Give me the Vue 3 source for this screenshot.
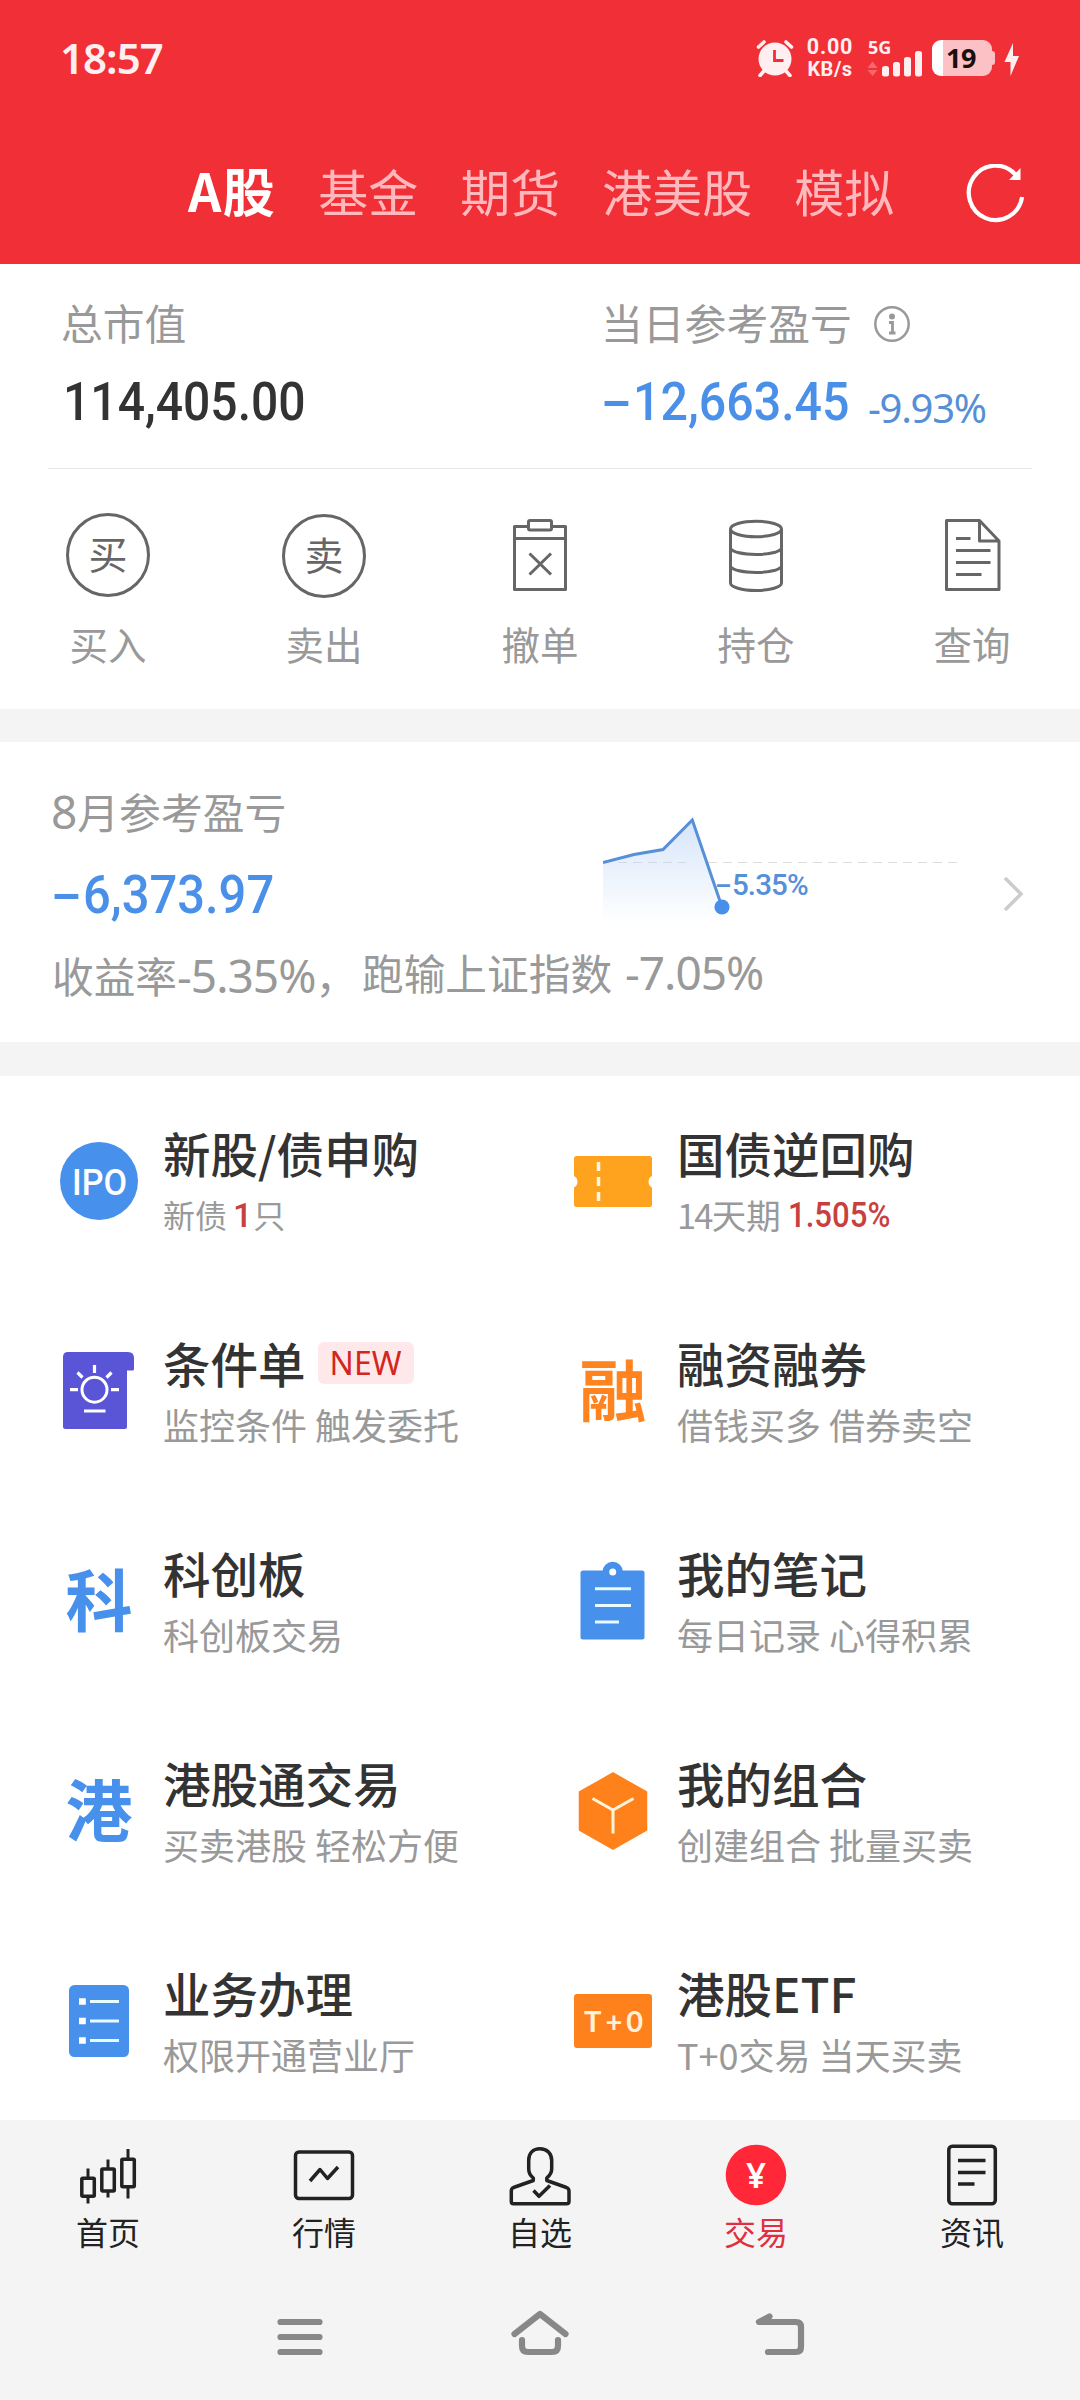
<script setup>
const tabs = ['A股', '基金', '期货', '港美股', '模拟']

const actions = [
  { key: 'buy', label: '买入', mark: '买' },
  { key: 'sell', label: '卖出', mark: '卖' },
  { key: 'cancel', label: '撤单' },
  { key: 'hold', label: '持仓' },
  { key: 'query', label: '查询' },
]

const services = [
  { key: 'ipo', title: '新股/债申购' },
  { key: 'bond', title: '国债逆回购' },
  { key: 'cond', title: '条件单', badge: 'NEW', sub: '监控条件 触发委托' },
  { key: 'char', mark: '融', tone: 'orange', title: '融资融券', sub: '借钱买多 借券卖空' },
  { key: 'char', mark: '科', tone: 'blue', title: '科创板', sub: '科创板交易' },
  { key: 'note', title: '我的笔记', sub: '每日记录 心得积累' },
  { key: 'char', mark: '港', tone: 'blue', title: '港股通交易', sub: '买卖港股 轻松方便' },
  { key: 'combo', title: '我的组合', sub: '创建组合 批量买卖' },
  { key: 'list', title: '业务办理', sub: '权限开通营业厅' },
  { key: 't0', title: '港股ETF', sub: 'T+0交易 当天买卖' },
]

const navs = [
  { key: 'home', label: '首页' },
  { key: 'market', label: '行情' },
  { key: 'self', label: '自选' },
  { key: 'trade', label: '交易', active: true },
  { key: 'news', label: '资讯' },
]
</script>

<template>
  <div class="screen">
    <header class="top">
      <div class="status">
        <span class="clock">18:57</span>
        <div class="status-right">
          <svg class="alarm" viewBox="0 0 38 38" width="38" height="38">
            <circle cx="19" cy="20" r="16.5" fill="#ffeff0" />
            <path d="M2.5 8 8 3M35.5 8 30 3M8 32l-4 4.5M30 32l4 4.5" stroke="#ffeff0" stroke-width="3.6" stroke-linecap="round" />
            <path d="M18.5 11v10.500h9" fill="none" stroke="#f12f37" stroke-width="2.800" />
          </svg>
          <div class="speed"><span>0.00</span><span>KB/s</span></div>
          <div class="signal">
            <span class="g5">5G</span>
            <svg viewBox="0 0 56 38" width="56" height="38">
              <path d="M.5 29 5.500 22.500 10.500 29zM.5 31h10L5.500 37z" fill="#f8676c" />
              <g fill="#ffeff0">
                <rect x="15" y="27" width="7" height="10.500" rx="2.500" />
                <rect x="26" y="23" width="7" height="14.500" rx="2.500" />
                <rect x="37" y="18" width="7" height="19.500" rx="2.500" />
                <rect x="48" y="12" width="7" height="25.500" rx="2.500" />
              </g>
            </svg>
          </div>
          <div class="battery"><span>19</span></div>
          <svg class="bolt" viewBox="0 0 16 34" width="16" height="34">
            <path d="M9 0 .5 19H6.500V33L15 13H9z" fill="#ffeff0" />
          </svg>
        </div>
      </div>
      <nav class="tabs">
        <span v-for="(t, i) in tabs" :key="t" class="tab" :class="{ on: i === 0 }">{{ t }}</span>
        <svg class="refresh" viewBox="0 4 60 60" width="60" height="60">
          <path d="M49.500 14.600A26.800 27.200 0 1 0 56.100 37" fill="none" stroke="#fff" stroke-width="4.200" />
          <path d="M54.500 8v12H43z" fill="#fff" />
        </svg>
      </nav>
    </header>

    <section class="card assets">
      <div class="summary">
        <div class="cell">
          <div class="cap">总市值</div>
          <div class="amount dark"><span class="num">114,405.00</span></div>
        </div>
        <div class="cell">
          <div class="cap">当日参考盈亏
            <svg viewBox="0 0 38 38" width="38" height="38">
              <circle cx="19" cy="19" r="16.700" fill="none" stroke="#999" stroke-width="2.500" />
              <circle cx="19" cy="11.500" r="3" fill="#999" />
              <path d="M16 17.500h3.500V28M16 28h6.500" fill="none" stroke="#999" stroke-width="2.800" />
            </svg>
          </div>
          <div class="amount blue">
            <span class="minus">-</span><span class="num day">12,663.45</span><span class="pct">-9.93%</span>
          </div>
        </div>
      </div>
      <div class="actions">
        <div v-for="a in actions" :key="a.key" class="action">
          <span v-if="a.mark" class="ring" :class="a.key">{{ a.mark }}</span>
          <svg v-else viewBox="0 0 90 90" width="90" height="90" fill="none" stroke="#666" stroke-width="3" stroke-linejoin="round">
            <template v-if="a.key === 'cancel'">
              <path d="M33.500 16.500h-14v63h51v-63h-14" />
              <rect x="33.500" y="10.500" width="23" height="9.500" rx="1.500" />
              <path d="M19.500 28.500h51M34.500 43.500l21.500 21M56 43.500l-21.500 21" />
            </template>
            <template v-else-if="a.key === 'hold'">
              <ellipse cx="45" cy="19" rx="25.500" ry="7.800" />
              <path d="M19.500 19v54c0 4 11 7.500 25.500 7.500S70.500 77 70.500 73V19M19.500 38.500C22 42 32 44.500 45 44.500s23-2.500 25.500-6M19.500 56.500C22 60 32 62.500 45 62.500s23-2.500 25.500-6" />
            </template>
            <template v-else>
              <path d="M52.500 10.500h-33v69h52.500v-48.500zM52.500 10.500v20.500h19.500M29 28.500h14.500M29 40.500h34.500M29 52.500h34.500M29 64.500h25.500" />
            </template>
          </svg>
          <span class="action-label">{{ a.label }}</span>
        </div>
      </div>
    </section>

    <section class="card month">
      <div class="month-main">
        <div class="month-text">
          <div class="cap"><span class="lat">8</span>月参考盈亏</div>
          <div class="amount blue"><span class="minus">-</span><span class="num mon">6,373.97</span></div>
        </div>
        <div class="chart">
          <svg viewBox="603 810 360 120" width="360" height="120">
            <defs>
              <linearGradient id="area" x1="0" y1="0" x2="0" y2="1">
                <stop offset="0" stop-color="#d6e5fa" />
                <stop offset="1" stop-color="#ffffff" />
              </linearGradient>
            </defs>
            <path d="M603 862.500H958" stroke="#dcdcdc" stroke-width="1.200" stroke-dasharray="9 6" />
            <path d="M603 862.500 634 854.500 663 849.500 692 820 722 907V922H603z" fill="url(#area)" />
            <path d="M618 862.500H686" stroke="#d2d9e4" stroke-width="1.200" stroke-dasharray="9 6" />
            <path d="M603 862.500 634 854.500 663 849.500 692.300 820 722 907" fill="none" stroke="#5590d9" stroke-width="3" />
            <circle cx="722" cy="907" r="7.600" fill="#478feb" />
          </svg>
          <span class="chart-tag"><span class="dash">-</span>5.35%</span>
        </div>
        <svg class="chev" viewBox="0 0 24 40" width="24" height="40">
          <path d="M3 4 19 20 3 36" fill="none" stroke="#ccc" stroke-width="3.600" />
        </svg>
      </div>
      <div class="month-note">
        <span class="n1">收益率<span class="lat a">-5.35%</span>，</span><span class="n2">跑输上证指数</span><span class="lat b">-7.05%</span>
      </div>
    </section>

    <section class="card services">
      <div v-for="s in services" :key="s.title" class="service">
        <span v-if="s.key === 'char'" class="glyph" :class="s.tone">{{ s.mark }}</span>
        <svg v-else class="pic" viewBox="0 0 84 84" width="84" height="84">
          <template v-if="s.key === 'ipo'">
            <circle cx="42" cy="42" r="39" fill="#4790ec" />
            <text x="42.500" y="55.500" class="ipo" text-anchor="middle" textLength="55" lengthAdjust="spacingAndGlyphs">IPO</text>
          </template>
          <template v-else-if="s.key === 'bond'">
            <path d="M5.500 17h73a2.500 2.500 0 0 1 2.500 2.500V37a6.500 6.500 0 0 0 0 11.500v17a2.500 2.500 0 0 1-2.500 2.500h-73A2.500 2.500 0 0 1 3 65.500v-17A6.500 6.500 0 0 0 3 37V19.500A2.500 2.500 0 0 1 5.500 17z" fill="#ffa21d" />
            <path d="M27.500 23v9M27.500 38v9M27.500 53v9" stroke="#fff6e3" stroke-width="3.500" />
          </template>
          <template v-else-if="s.key === 'cond'">
            <path d="M11 3h60q6 0 6 6v11q0 1.500-1.500 1.500H70V77.500q0 2.500-2.500 2.500H8.500Q6 80 6 77.500V8q0-5 5-5z" fill="#5955d6" />
            <circle cx="37.500" cy="40.700" r="12.500" fill="none" stroke="#fff" stroke-width="3" />
            <path d="M37.500 16v8M13 40.700h8M54 40.700h8M20.500 23.500l5 5M54.500 23.500l-5 5M27 62h21.500" stroke="#fff" stroke-width="3.200" />
          </template>
          <template v-else-if="s.key === 'note'">
            <path d="M12.500 12H32.300a10.300 10.300 0 0 1 19.400 0H71.500a2.500 2.500 0 0 1 2.500 2.500V78.500a2.500 2.500 0 0 1-2.500 2.500h-59A2.500 2.500 0 0 1 10 78.500v-64A2.500 2.500 0 0 1 12.500 12z" transform="translate(-.5 -.5)" fill="#4790ec" />
            <path d="M31.500 13a10.200 10.200 0 0 1 20.400 0z" fill="#4790ec" />
            <circle cx="41.700" cy="13" r="3.500" fill="#fff" />
            <path d="M24 29.700h36M24 46.500h36M24 63h24" stroke="#e8fbff" stroke-width="3" />
          </template>
          <template v-else-if="s.key === 'combo'">
            <path d="M42 4 75.500 23v38L42 80 8.500 61V23z" fill="#ff811c" stroke="#ff811c" stroke-width="1.500" stroke-linejoin="round" />
            <path d="M21.500 29.500 42 41 62.500 29.500M42 41v23.500" fill="none" stroke="#fff3da" stroke-width="3" />
          </template>
          <template v-else-if="s.key === 'list'">
            <rect x="12" y="6" width="60" height="72" rx="5.500" fill="#4790ec" />
            <path d="M22 22.500h6.800M22 42h6.800M22 61.500h6.800" stroke="#fff" stroke-width="6.500" />
            <path d="M33 22.500h29M33 42h29M33 61.500h29" stroke="#e8fbff" stroke-width="3" />
          </template>
          <template v-else>
            <rect x="3" y="15" width="78" height="54" rx="3" fill="#ff811c" />
            <text x="42.500" y="52.500" class="tzero" text-anchor="middle" textLength="59">T+0</text>
          </template>
        </svg>
        <div class="info">
          <div class="title">{{ s.title }}<span v-if="s.badge" class="badge">{{ s.badge }}</span></div>
          <div v-if="s.key === 'ipo'" class="sub small">新债<b class="one">1</b>只</div>
          <div v-else-if="s.key === 'bond'" class="sub mid"><span class="days">14</span>天期<b class="rate">1.505%</b></div>
          <div v-else class="sub">{{ s.sub }}</div>
        </div>
      </div>
    </section>

    <footer class="bottom">
      <div class="navs">
        <div v-for="n in navs" :key="n.key" class="nav" :class="{ active: n.active }">
          <svg viewBox="0 0 70 70" width="70" height="70" fill="none" stroke="#222" stroke-width="3.500" stroke-linejoin="round">
            <template v-if="n.key === 'home'">
              <rect x="8.800" y="38.300" width="12.500" height="18" rx="1" />
              <rect x="28.800" y="29" width="12.500" height="22" rx="1" />
              <rect x="48.800" y="19.300" width="12.500" height="27.500" rx="1" />
              <path d="M15 28.500v9M15 57v6.500M35 19.500v9M35 52v5.500M55 9v10M55 47.500V58.500" stroke-width="3" />
            </template>
            <template v-else-if="n.key === 'market'">
              <rect x="6.500" y="12" width="57" height="46.500" rx="3.500" />
              <path d="M21 41 31 29.500 38.500 38.500 49 27" />
            </template>
            <template v-else-if="n.key === 'self'">
              <path d="M28.300 38C24.500 35 23.700 32 23.700 29V20.500C23.700 13.500 28 8.800 35 8.800S46.700 13.500 46.700 20.500V29C46.700 32 46 34.500 41.800 38v2.500L61.500 47.500Q64 48.500 64 51V61.500Q64 63.800 61.500 63.800H8.500Q6.300 63.800 6.300 61.500V51Q6.300 48.500 8.500 47.500L28.300 40.500z" />
              <path d="M28.500 50.500 34 56.300 45 45.500" />
            </template>
            <template v-else-if="n.key === 'trade'">
              <circle cx="35" cy="35" r="30.300" fill="#ff2738" stroke="none" />
              <text x="35" y="48" class="yen" text-anchor="middle">¥</text>
            </template>
            <template v-else>
              <rect x="11.800" y="6.200" width="46.500" height="57.500" rx="3.500" />
              <path d="M21 20.500h27.500M21 32.500h27.500M21 44h16.500" />
            </template>
          </svg>
          <span>{{ n.label }}</span>
        </div>
      </div>
      <div class="sys">
        <svg viewBox="270 2300 540 70" width="540" height="70" fill="none" stroke="#888" stroke-width="6.200" stroke-linecap="round" stroke-linejoin="round">
          <path d="M280.500 2322h39M280.500 2337h39M280.500 2352h39" />
          <path d="M514.500 2334 540 2314 565.500 2334M522 2340v6q0 6 6 6h24q6 0 6-6v-6" />
          <path d="M769.500 2316.500 759 2322H796q5 0 5 5v20q0 5-5 5H768" />
        </svg>
      </div>
    </footer>
  </div>
</template>

<style>
body {
  background: #fff;
}
</style>

<style scoped>
.screen {
  width: 1080px;
  height: 2400px;
  overflow: hidden;
  background: #f4f4f4;
  display: flex;
  flex-direction: column;
  font-family: 'Noto Sans CJK SC', sans-serif;
  white-space: nowrap;
}
svg {
  display: block;
  flex: none;
}
.top {
  height: 264px;
  background: #f12f37;
  color: #fff;
}
.status {
  height: 116px;
  display: flex;
  justify-content: space-between;
  padding: 0 60px 0 60px;
}
.clock {
  font: 600 42px/115px 'Noto Sans', sans-serif;
  color: #ffeff0;
  letter-spacing: -1px;
}
.status-right {
  display: flex;
  align-items: center;
}
.speed {
  width: 50px;
  margin-left: 11px;
  display: flex;
  flex-direction: column;
  align-items: center;
  font: 700 20px/22px Roboto, sans-serif;
  color: #ffeff0;
}
.speed span:first-child {
  font-size: 21.500px;
  letter-spacing: 0.800px;
}
.speed span:last-child {
  letter-spacing: 0.500px;
}
.signal {
  position: relative;
  margin-left: 12px;
}
.g5 {
  position: absolute;
  left: 1px;
  top: -4px;
  font: 700 18px/24px 'Noto Sans', sans-serif;
  color: #ffeff0;
}
.battery {
  position: relative;
  width: 60px;
  height: 36px;
  margin-left: 9px;
  border-radius: 9px;
  background: linear-gradient(90deg, #fff 11px, #fbc1c4 11px);
  font: 700 27px/36px 'Noto Sans', sans-serif;
  color: #1a0e0f;
}
.battery span {
  display: block;
  padding-left: 14px;
  letter-spacing: -0.500px;
}
.battery::after {
  content: '';
  position: absolute;
  left: 60px;
  top: 11px;
  width: 3px;
  height: 14px;
  border-radius: 0 3px 3px 0;
  background: #fbc1c4;
}
.bolt {
  margin: 4px 0 0 12px;
}
.tabs {
  height: 148px;
  display: flex;
  align-items: center;
  gap: 42px;
  padding: 4px 54px 0 188px;
}
.tab {
  font-size: 50px;
  line-height: 72px;
  margin-top: -8px;
  color: #ffb9bd;
}
.tab.on {
  font-size: 52px;
  font-weight: 700;
  color: #fff;
  letter-spacing: 1.500px;
}
.refresh {
  margin-left: auto;
}
.card {
  background: #fff;
}
.assets {
  height: 445px;
  margin-bottom: 33px;
}
.summary {
  display: grid;
  grid-template-columns: 540px 1fr;
  height: 205px;
  box-sizing: border-box;
  margin: 0 48px;
  padding: 28px 0 0 13px;
  border-bottom: 1px solid #e8e8e8;
}
.cap {
  display: flex;
  align-items: center;
  height: 60px;
  font-size: 41.800px;
  line-height: 60px;
  color: #999;
}
.cap svg {
  margin: 4px 0 0 21px;
}
.lat {
  font-family: 'Noto Sans', sans-serif;
  font-size: 46px;
}
.amount {
  display: flex;
  align-items: center;
  height: 60px;
  margin-top: 20px;
  padding-left: 2px;
  font: 500 54px/60px Roboto, sans-serif;
}
.dark {
  color: #333;
}
.blue {
  color: #4a90e8;
}
.num {
  display: inline-block;
  width: 238px;
  transform: scaleX(0.89);
  transform-origin: left;
}
.minus {
  display: inline-block;
  width: 32px;
  transform: scaleX(1.700);
  transform-origin: left;
  margin-left: -2px;
}
.num.day {
  width: 235px;
  transform: scaleX(0.895);
}
.num.mon {
  transform: scaleX(0.905);
}
.pct {
  font: 400 40px/60px 'Noto Sans', sans-serif;
  letter-spacing: -1.300px;
  color: #568fd6;
  margin-top: 11px;
}
.actions {
  display: grid;
  grid-template-columns: repeat(5, 1fr);
  padding-top: 41px;
}
.action {
  display: flex;
  flex-direction: column;
  align-items: center;
}
.ring {
  box-sizing: border-box;
  width: 84px;
  height: 84px;
  margin: 3px 0;
  border: 3px solid #666;
  border-radius: 50%;
  text-align: center;
  font-size: 39px;
  line-height: 73px;
  color: #666;
}
.ring.sell {
  margin: 4px 0 2px;
}
.action-label {
  margin-top: 18px;
  font-size: 38.500px;
  line-height: 50px;
  color: #999;
}
.month {
  height: 300px;
  margin-bottom: 34px;
}
.month-main {
  display: flex;
  padding: 39px 0 0 51px;
}
.month-text {
  width: 552px;
}
.month-text .amount {
  margin-top: 24px;
}
.chart {
  position: relative;
  padding-top: 29px;
}
.chart-tag {
  position: absolute;
  left: 112px;
  top: 86px;
  font: 500 29.500px/36px Roboto, sans-serif;
  letter-spacing: -0.900px;
  color: #5590d9;
}
.dash {
  display: inline-block;
  width: 17px;
  transform: scaleX(1.700);
  transform-origin: left;
}
.chev {
  margin: 93px 0 0 39px;
}
.month-note {
  display: flex;
  padding-left: 52px;
  margin-top: 12px;
  font-size: 41.700px;
  line-height: 60px;
  color: #999;
}
.n1 {
  width: 310px;
  margin-top: 3px;
  height: 57px;
}
.n2 {
  width: 263px;
}
.lat.a,
.lat.b {
  letter-spacing: -1px;
}
.services {
  height: 1044px;
  display: grid;
  grid-template-columns: 514px 1fr;
  grid-auto-rows: 210px;
  padding-left: 57px;
  box-sizing: border-box;
}
.service {
  display: flex;
}
.pic,
.glyph {
  margin-top: 63px;
  width: 84px;
  height: 84px;
  flex: none;
}
.glyph {
  text-align: center;
  font-size: 67px;
  font-weight: 700;
  line-height: 76px;
}
.glyph.orange {
  color: #ff8420;
}
.glyph.blue {
  color: #4790ec;
}
.ipo {
  font: 500 37px Roboto, sans-serif;
  fill: #fff;
}
.tzero {
  font: 700 29px Lato, sans-serif;
  fill: #fff0d8;
}
.info {
  padding: 42px 0 0 22px;
}
.title {
  display: flex;
  align-items: center;
  height: 70px;
  font-size: 47.500px;
  font-weight: 500;
  line-height: 70px;
  color: #333;
}
.badge {
  box-sizing: border-box;
  width: 96px;
  height: 42px;
  margin-left: 12px;
  border-radius: 6px;
  background: #ffe8ea;
  color: #d3261d;
  text-align: center;
  font: 400 32px/42px 'Noto Sans', sans-serif;
}
.sub {
  display: flex;
  height: 50px;
  margin-top: 1px;
  font-size: 36px;
  line-height: 50px;
  color: #999;
}
.small {
  font-size: 32px;
}
.mid {
  font-size: 34.500px;
}
.one {
  font: 500 34px/52px Roboto, sans-serif;
  margin: 0 1px 0 6px;
  color: #c8403e;
}
.days {
  letter-spacing: -1.800px;
}
.rate {
  font: 500 35px/53px Roboto, sans-serif;
  margin-left: 7px;
  transform: scaleX(0.89);
  transform-origin: left;
  color: #c8403e;
}
.bottom {
  flex: 1;
}
.navs {
  display: grid;
  grid-template-columns: repeat(5, 1fr);
  padding-top: 20px;
}
.nav {
  display: flex;
  flex-direction: column;
  align-items: center;
  font-size: 32px;
  line-height: 42px;
  color: #222;
}
.nav.active {
  color: #e03040;
}
.yen {
  font: 600 35px 'Noto Sans', sans-serif;
  fill: #fff;
  stroke: none;
}
.sys {
  display: flex;
  justify-content: center;
  padding-top: 48px;
}
</style>
